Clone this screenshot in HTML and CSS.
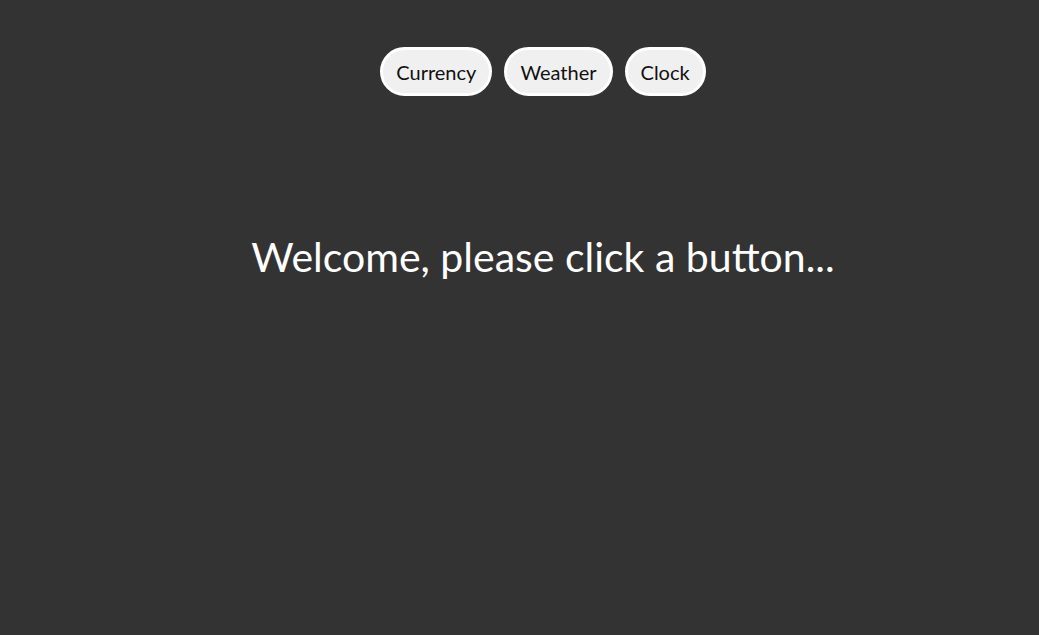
FILE: index.html
```html
<!DOCTYPE html>
<html>
<head>
<meta charset="utf-8">
<link rel="stylesheet" href="styles.css">
</head>
<body>
<div class="app">
  <nav class="nav">
    <button class="btn">Currency</button>
    <button class="btn">Weather</button>
    <button class="btn">Clock</button>
  </nav>
  <h1 class="welcome">Welcome, please click a button...</h1>
</div>
</body>
</html>
```
FILE: styles.css
```css
html, body {
  margin: 0;
  padding: 0;
  background: #333333;
  height: 100%;
}
.app {
  display: flex;
  flex-direction: column;
  align-items: center;
  padding-left: 47px;
  padding-top: 47px;
  font-family: Lato, "Open Sans", sans-serif;
}
.nav {
  display: flex;
  gap: 12px;
}
.btn {
  font-family: Lato, sans-serif;
  font-size: 20px;
  color: #111;
  background: #f0f0f0;
  border: 3px solid #ffffff;
  border-radius: 25px;
  height: 49px;
  padding: 0 13px;
}
.welcome {
  margin: 136px 0 0;
  font-weight: 400;
  font-size: 41px;
  color: #ffffff;
}
```
